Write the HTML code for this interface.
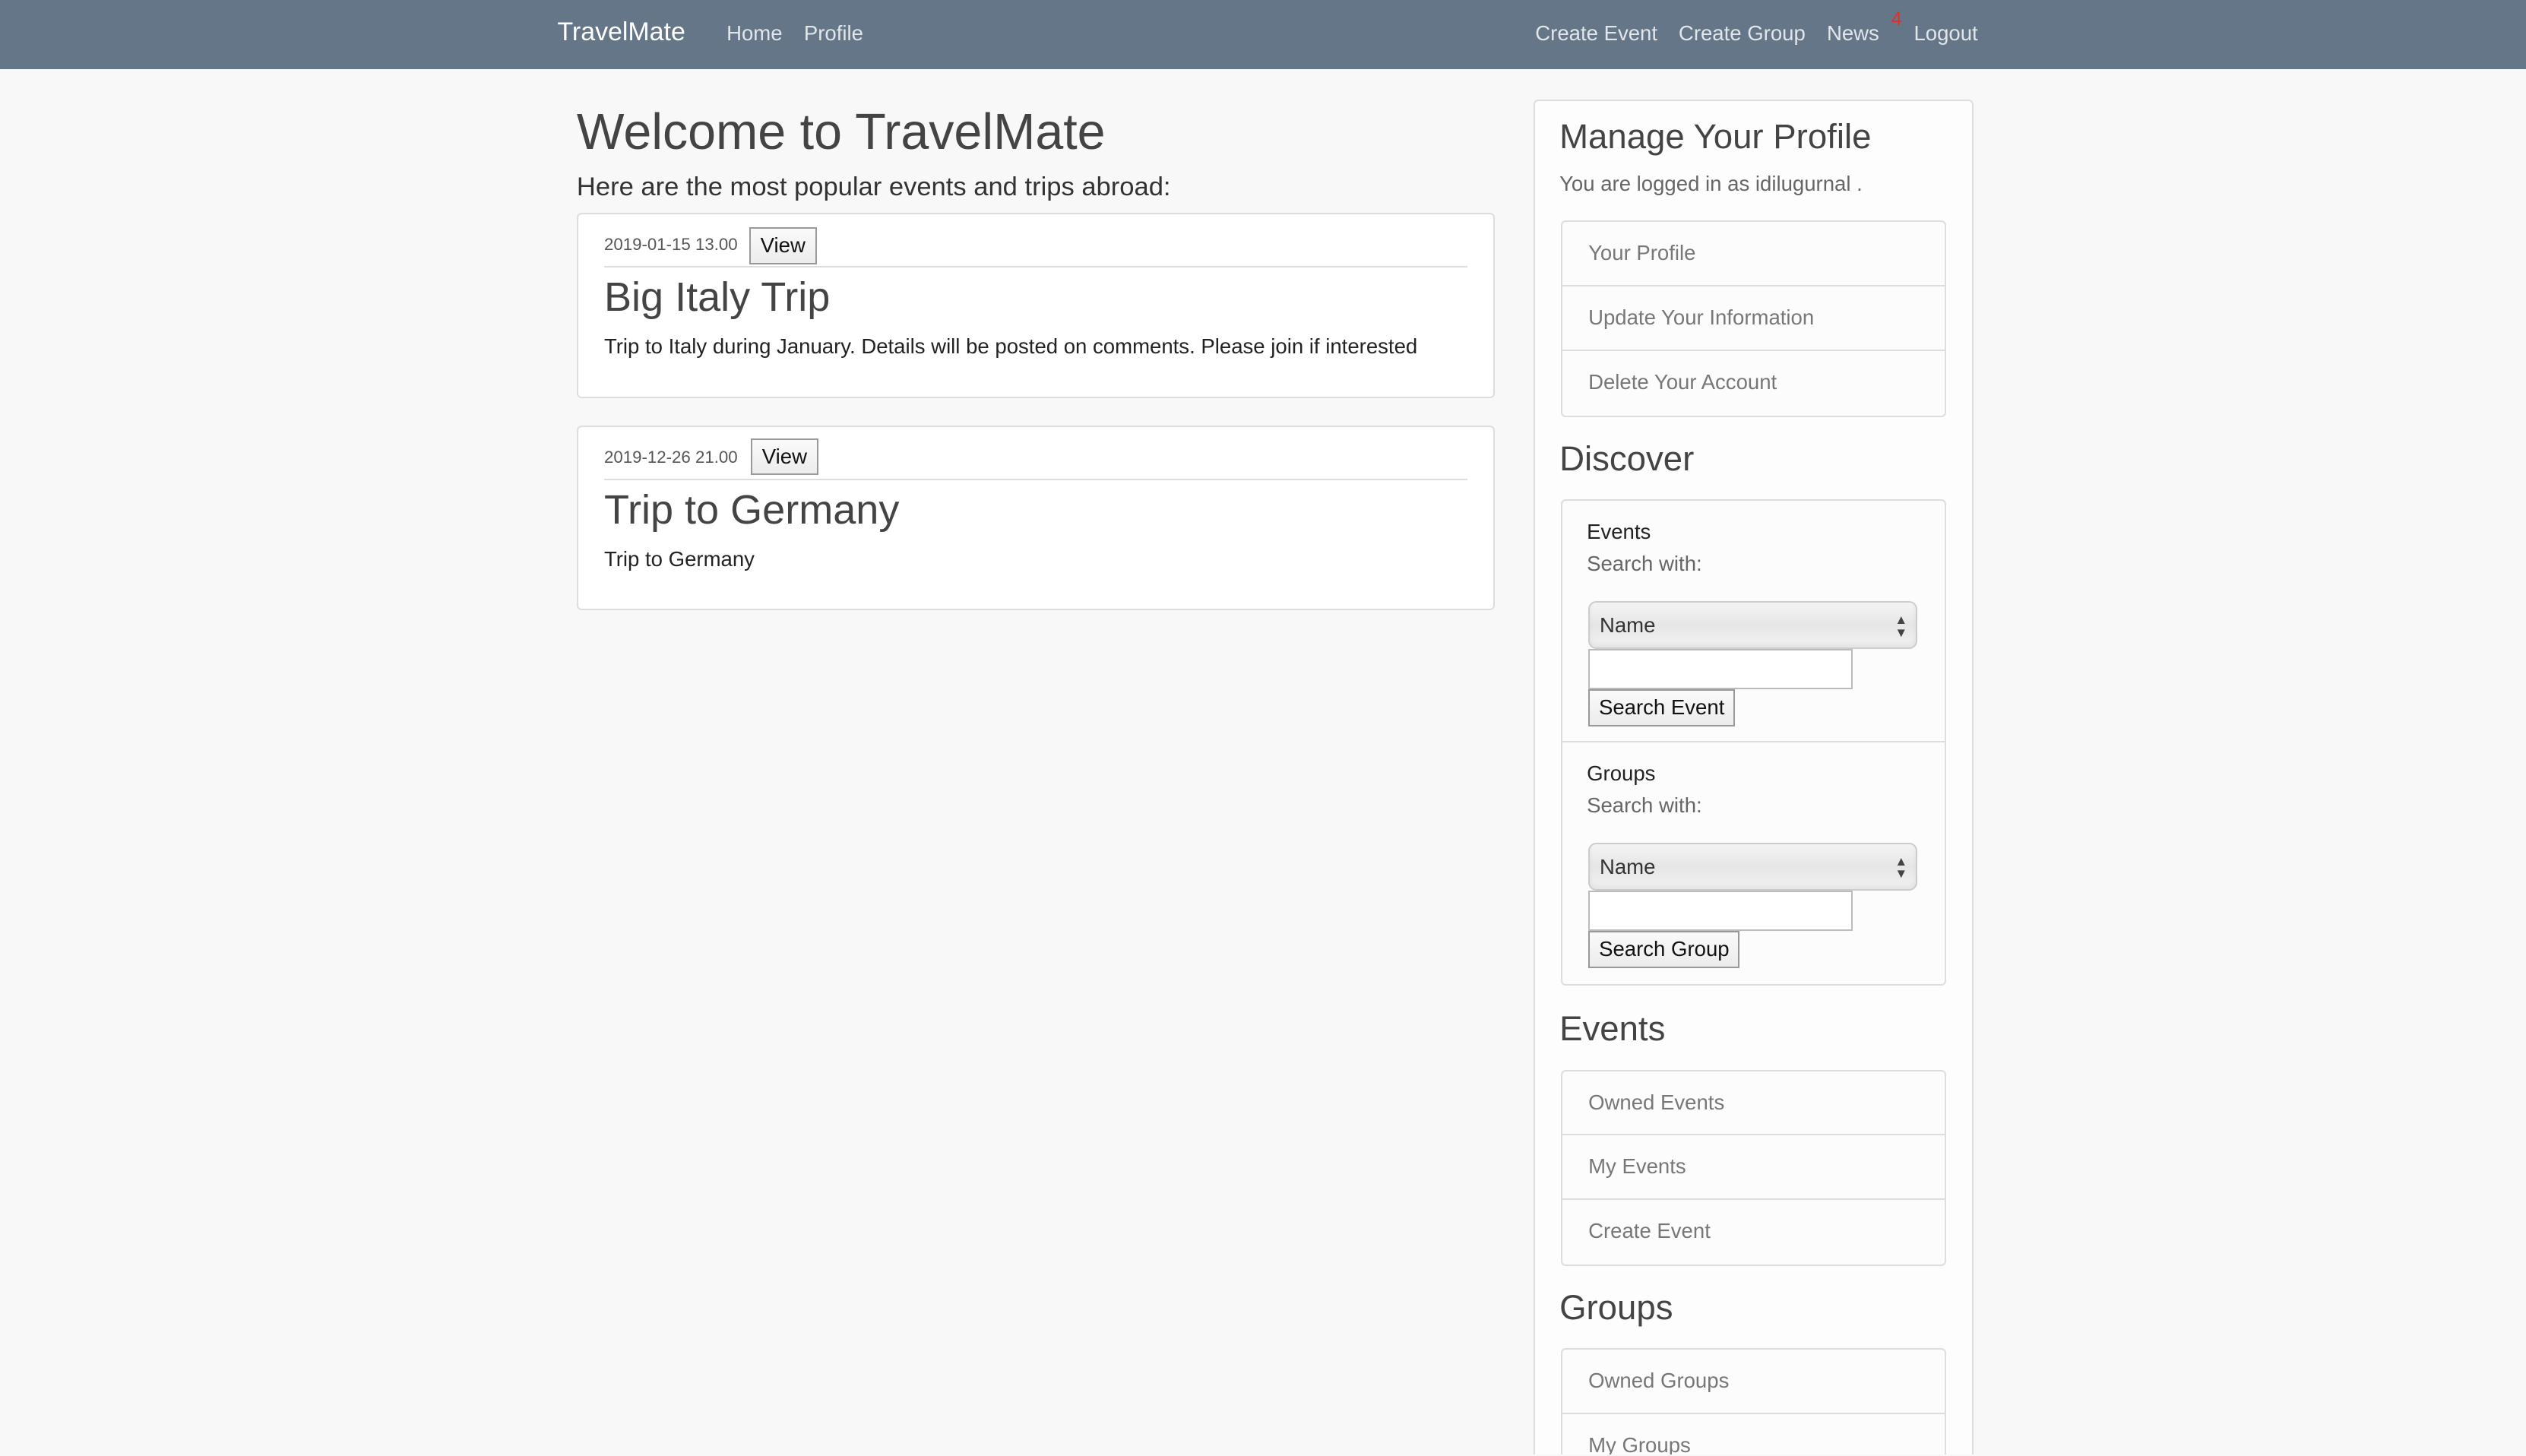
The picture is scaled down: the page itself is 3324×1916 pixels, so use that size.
<!DOCTYPE html>
<html><head><meta charset="utf-8"><style>
html,body{margin:0;padding:0;overflow:hidden;}
body{width:3324px;height:1916px;overflow:hidden;background:#f8f8f8;font-family:"Liberation Sans",sans-serif;}
#w{zoom:2.1199;position:relative;width:1568px;height:903px;overflow:hidden;}
.a{position:absolute;white-space:nowrap;}
.t{line-height:20px;}
.nav{position:absolute;left:0;top:0;width:1568px;height:43px;background:#647687;}
.nl{color:#e2e6ea;font-size:13px;top:11px;}
.card{position:absolute;background:#fff;border:1px solid #ddd;border-radius:3px;box-sizing:border-box;}
.btn{position:absolute;background:linear-gradient(#fafafa,#ececec);border:1px solid #999;box-sizing:border-box;font-size:13px;color:#111;text-align:center;}
.list{position:absolute;left:969px;width:239px;border:1px solid #ddd;border-radius:3px;box-sizing:border-box;background:#fcfcfc;overflow:hidden;}
.list div{height:40px;line-height:39px;border-bottom:1px solid #ddd;padding-left:16px;font-size:13px;color:#777;box-sizing:border-box;}
.list div:last-child{border-bottom:none;}
h{position:absolute;font-size:21.5px;color:#444;line-height:24px;white-space:nowrap;}
.sel{position:absolute;left:986px;width:204px;height:30px;border:1px solid #ccc;border-radius:5px;box-sizing:border-box;background:linear-gradient(#f4f4f4,#e6e6e6 50%,#f2f2f2);box-shadow:inset 0 -2px 3px rgba(0,0,0,.06);font-size:13px;color:#333;line-height:28px;padding-left:6px;}
.sel span{position:absolute;right:5px;font-size:8px;line-height:8px;top:7px;color:#444}
.inp{position:absolute;left:986px;width:164px;height:25px;border:1px solid #bbb;background:#fff;box-sizing:border-box;}
</style></head><body><div id="w">
<div class="nav"></div>
<div class="a" style="left:346px;top:10px;font-size:16px;color:#fff;line-height:20px">TravelMate</div>
<div class="a nl t" style="left:451px">Home</div>
<div class="a nl t" style="left:499px">Profile</div>
<div class="a nl t" style="left:953px">Create Event</div>
<div class="a nl t" style="left:1042px">Create Group</div>
<div class="a nl t" style="left:1134px">News</div>
<div class="a" style="left:1174px;top:5px;font-size:12px;color:#e0302a;line-height:14px">4</div>
<div class="a nl t" style="left:1188px">Logout</div>

<div class="a" style="left:358px;top:63px;font-size:31.3px;color:#444;line-height:38px">Welcome to TravelMate</div>
<div class="a" style="left:358px;top:105px;font-size:16.3px;color:#333;line-height:22px">Here are the most popular events and trips abroad:</div>

<div class="card" style="left:358px;top:132px;width:570px;height:115px"></div>
<div class="a" style="left:375px;top:145px;font-size:10.5px;color:#555;line-height:14px">2019-01-15 13.00</div>
<div class="btn" style="left:465px;top:141px;width:42px;height:23px;line-height:21px">View</div>
<div class="a" style="left:375px;top:165px;width:536px;height:1px;background:#ddd"></div>
<div class="a" style="left:375px;top:170px;font-size:25.5px;color:#444;line-height:30px">Big Italy Trip</div>
<div class="a" style="left:375px;top:207px;font-size:13px;color:#222;line-height:16px">Trip to Italy during January. Details will be posted on comments. Please join if interested</div>

<div class="card" style="left:358px;top:264px;width:570px;height:115px"></div>
<div class="a" style="left:375px;top:277px;font-size:10.5px;color:#555;line-height:14px">2019-12-26 21.00</div>
<div class="btn" style="left:466px;top:272px;width:42px;height:23px;line-height:21px">View</div>
<div class="a" style="left:375px;top:297px;width:536px;height:1px;background:#ddd"></div>
<div class="a" style="left:375px;top:302px;font-size:25.5px;color:#444;line-height:30px">Trip to Germany</div>
<div class="a" style="left:375px;top:339px;font-size:13px;color:#222;line-height:16px">Trip to Germany</div>

<div class="card" style="left:952px;top:62px;width:273px;height:841px;background:#fdfdfd;border-bottom:none;border-radius:3px 3px 0 0"></div>
<h style="left:968px;top:73px">Manage Your Profile</h>
<div class="a" style="left:968px;top:106px;font-size:13px;color:#666;line-height:16px">You are logged in as idilugurnal .</div>
<div class="list" style="top:137px"><div>Your Profile</div><div>Update Your Information</div><div>Delete Your Account</div></div>
<h style="left:968px;top:273px">Discover</h>
<div class="list" style="top:310px;height:302px"></div>
<div class="a" style="left:969px;top:460px;width:239px;height:1px;background:#ddd"></div>
<div class="a" style="left:985px;top:322px;font-size:13px;color:#222;line-height:16px">Events</div>
<div class="a" style="left:985px;top:342px;font-size:13px;color:#666;line-height:16px">Search with:</div>
<div class="sel" style="top:373px">Name<span>▲<br>▼</span></div>
<div class="inp" style="top:403px"></div>
<div class="btn" style="left:986px;top:428px;width:91px;height:23px;line-height:21px">Search Event</div>
<div class="a" style="left:985px;top:472px;font-size:13px;color:#222;line-height:16px">Groups</div>
<div class="a" style="left:985px;top:492px;font-size:13px;color:#666;line-height:16px">Search with:</div>
<div class="sel" style="top:523px">Name<span>▲<br>▼</span></div>
<div class="inp" style="top:553px"></div>
<div class="btn" style="left:986px;top:578px;width:94px;height:23px;line-height:21px">Search Group</div>
<h style="left:968px;top:627px">Events</h>
<div class="list" style="top:664px"><div>Owned Events</div><div>My Events</div><div>Create Event</div></div>
<h style="left:968px;top:800px">Groups</h>
<div class="list" style="top:837px;height:66px;border-bottom:none;border-radius:3px 3px 0 0"><div>Owned Groups</div><div>My Groups</div></div>
</div></body></html>
